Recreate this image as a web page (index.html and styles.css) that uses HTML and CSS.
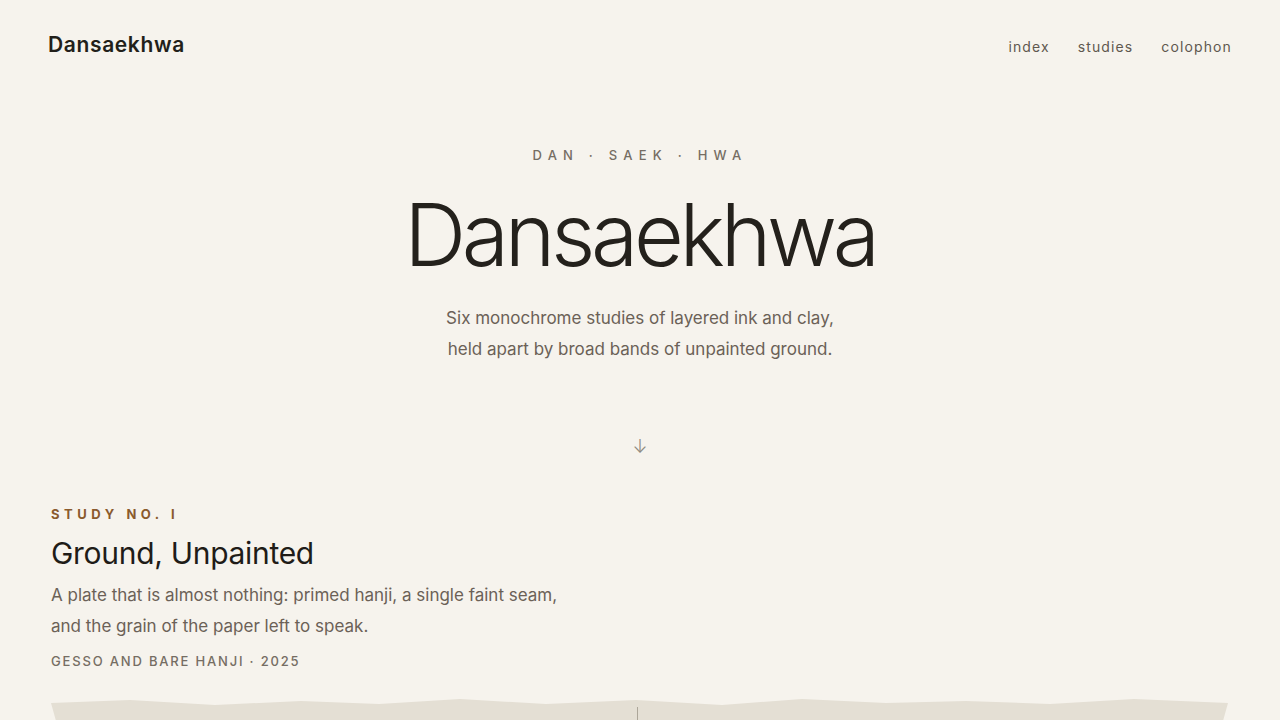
FILE: index.html
```html
<!DOCTYPE html>
<html lang="en">
<head>
  <meta charset="UTF-8">
  <title>Dansaekhwa</title>
  <link rel="stylesheet" href="styles.css">
</head>
<body>
  <header class="site-header">
    <a class="logo" href="#">Dansaekhwa</a>
    <nav class="site-nav">
      <a href="#">index</a>
      <a href="#">studies</a>
      <a href="#">colophon</a>
    </nav>
  </header>

  <section class="hero">
    <div class="eyebrow">Dan · Saek · Hwa</div>
    <h1 class="title">Dansaekhwa</h1>
    <p class="lede">Six monochrome studies of layered ink and clay,<br>held apart by broad bands of unpainted ground.</p>
    <div class="scroll-hint">↓</div>
  </section>

  <section class="study">
    <div class="study-text">
      <div class="study-label">Study No. I</div>
      <h2 class="study-title">Ground, Unpainted</h2>
      <p class="study-desc">A plate that is almost nothing: primed hanji, a single faint seam, and the grain of the paper left to speak.</p>
      <div class="study-meta">Gesso and bare hanji · 2025</div>
    </div>
    <div class="plate">
      <div class="seam"></div>
    </div>
  </section>
</body>
</html>
```

FILE: styles.css
```css
body {
  margin: 0;
  background-color: #f6f3ed;
  color: #24211c;
  font-family: 'Inter', 'Noto Sans', sans-serif;
}

a {
  color: inherit;
  text-decoration: none;
}

.site-header {
  height: 88px;
  padding: 0 48px;
  display: flex;
  align-items: center;
  justify-content: space-between;
}

.logo {
  font-size: 21px;
  font-weight: 600;
  letter-spacing: 0.03em;
  color: #221f1a;
}

.site-nav {
  display: flex;
  gap: 28px;
  padding-top: 4px;
}

.site-nav a {
  font-size: 14px;
  letter-spacing: 0.08em;
  color: #5f584f;
}

.hero {
  padding-top: 57px;
  text-align: center;
}

.eyebrow {
  font-size: 13px;
  line-height: 20px;
  font-weight: 500;
  letter-spacing: 0.48em;
  text-transform: uppercase;
  color: #756d63;
}

.title {
  margin: 17px 0 0;
  font-size: 86px;
  line-height: 106px;
  font-weight: 300;
  letter-spacing: -0.05em;
  color: #24211c;
}

.lede {
  margin: 15px 0 0;
  font-size: 17px;
  line-height: 31px;
  color: #6b6157;
}

.scroll-hint {
  margin-top: 70px;
  font-size: 18px;
  line-height: 24px;
  font-weight: 300;
  color: #8f897f;
}

.study {
  padding: 45px 52px 0 51px;
}

.study-label {
  font-size: 13px;
  line-height: 20px;
  font-weight: 700;
  letter-spacing: 0.35em;
  text-transform: uppercase;
  color: #8a5a2d;
}

.study-title {
  margin: 9px 0 0;
  font-size: 30px;
  line-height: 40px;
  font-weight: 400;
  letter-spacing: -0.01em;
  color: #1f1c18;
}

.study-desc {
  max-width: 520px;
  margin: 7px 0 0;
  font-size: 17px;
  line-height: 31px;
  color: #6b6157;
}

.study-meta {
  margin-top: 9px;
  font-size: 13px;
  line-height: 20px;
  font-weight: 500;
  letter-spacing: 0.14em;
  text-transform: uppercase;
  color: #756d63;
}

/* torn-edge paper plate */
.plate {
  position: relative;
  margin-top: 28px;
  height: 460px;
  background-color: #e4dfd4;
  clip-path: polygon(0 4px, 79px 1px, 164px 6px, 250px 2px, 328px 5px, 409px 0, 495px 5px, 585px 1px, 671px 6px, 751px 0, 835px 4px, 915px 2px, 999px 5px, 1083px 0, 100% 4px, calc(100% - 10px) 40px, calc(100% - 10px) 100%, 10px 100%, 10px 40px);
}

.seam {
  position: absolute;
  left: 586px;
  top: 8px;
  bottom: 0;
  width: 1px;
  background-color: #aca699;
}
```
